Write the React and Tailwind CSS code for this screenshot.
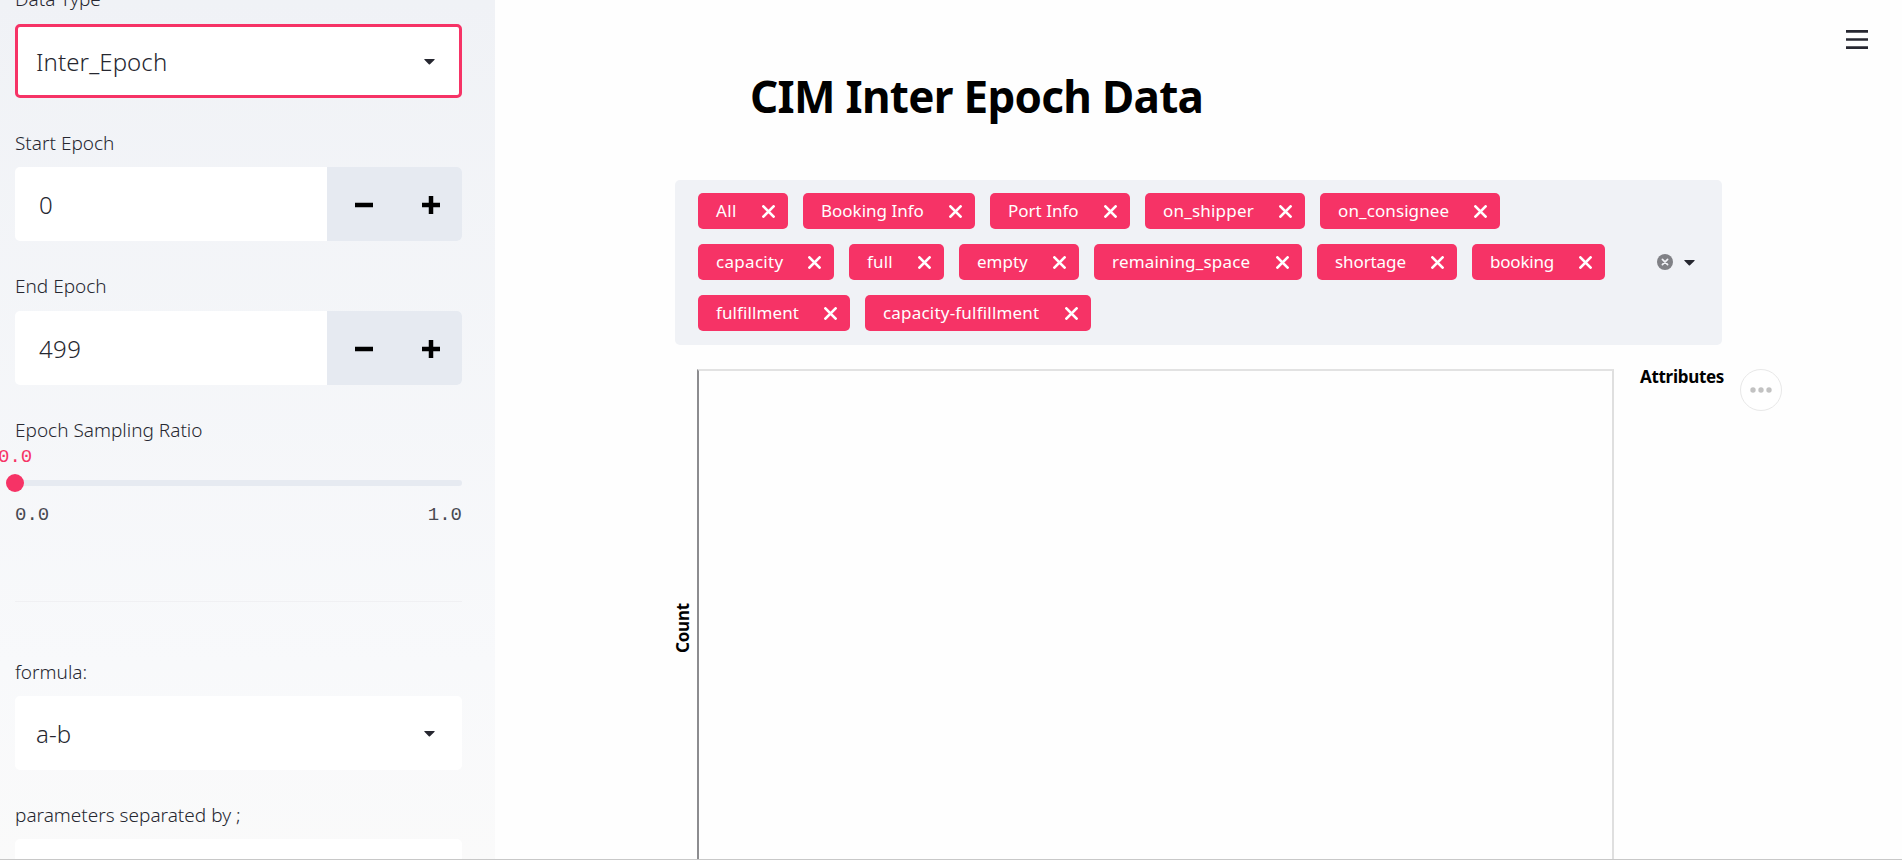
const Caret = () => (
  <svg className="h-[6px] w-[11px]" viewBox="0 0 11 6" fill="#262730">
    <path d="M0.2 0.6Q0 0 0.8 0H10.2Q11 0 10.6 0.7L6 5.2Q5.4 5.8 4.8 5.2Z" />
  </svg>
);

const Label = ({ children, className = '' }) => (
  <div className={`h-6 text-[19px] font-light leading-6 text-[#262730] ${className}`}>{children}</div>
);

const Select = ({ value, active, className = '' }) => (
  <div
    className={`flex h-[74px] w-[447px] items-center justify-between rounded-[5px] border-[3px] bg-white pl-[18px] pr-[24px] pt-px ${
      active ? 'border-[#f63366]' : 'border-white'
    } ${className}`}
  >
    <span className="text-2xl font-[350] leading-9 tracking-[0.1px] text-[#262730]">{value}</span>
    <Caret />
  </div>
);

const NumberInput = ({ value }) => (
  <div className="flex h-[74px] w-[447px] overflow-hidden rounded-[5px] bg-white">
    <div className="flex flex-1 items-center pl-6 pt-px text-2xl font-[350] tracking-[0.4px] text-[#262730]">{value}</div>
    <div className="flex w-[135px] bg-[#e6eaf1]">
      <button className="flex flex-1 items-center justify-center pl-[6px] pt-[2px]">
        <svg className="h-[18px] w-[18px]" viewBox="0 0 18 18">
          <path d="M0 9H18" stroke="#000" strokeWidth="4.5" />
        </svg>
      </button>
      <button className="flex flex-1 items-center justify-center pl-[6px] pt-[2px]">
        <svg className="h-[18px] w-[18px]" viewBox="0 0 18 18">
          <path d="M0 9H18M9 0V18" stroke="#000" strokeWidth="4.5" />
        </svg>
      </button>
    </div>
  </div>
);

const Tag = ({ text, size }) => (
  <div className={`flex h-9 items-center justify-between rounded-[5px] bg-[#f63366] pl-[18px] pr-[13px] text-white ${size}`}>
    <span className="whitespace-nowrap text-[17px] leading-6">{text}</span>
    <svg className="mt-px h-[13px] w-[13px] shrink-0" viewBox="0 0 13 13">
      <path d="M1.4 1.4L11.6 11.6M11.6 1.4L1.4 11.6" stroke="#fff" strokeWidth="2.7" strokeLinecap="round" />
    </svg>
  </div>
);

const rows = [
  [
    ['All', 'w-[90px] tracking-[0.4px]'],
    ['Booking Info', 'w-[172px]'],
    ['Port Info', 'w-[140px]'],
    ['on_shipper', 'w-[160px] tracking-[0.2px]'],
    ['on_consignee', 'w-[180px] tracking-[0.1px]'],
  ],
  [
    ['capacity', 'w-[136px] tracking-[0.3px]'],
    ['full', 'w-[95px] tracking-[0.2px]'],
    ['empty', 'w-[120px]'],
    ['remaining_space', 'w-[208px] tracking-[0.2px]'],
    ['shortage', 'w-[140px] tracking-[-0.1px]'],
    ['booking', 'w-[133px] tracking-[-0.2px]'],
  ],
  [
    ['fulfillment', 'w-[152px] tracking-[0.1px]'],
    ['capacity-fulfillment', 'w-[226px] tracking-[0.2px]'],
  ],
];

const Sidebar = () => (
  <aside className="h-[859px] w-[495px] shrink-0 overflow-hidden bg-linear-to-b from-[#f0f2f6] via-[#f8f9fb] via-77% to-[#fafafa] pl-[15px]">
    <Label className="-mt-[13px]">Data Type</Label>
    <Select value="Inter_Epoch" active className="mt-[13px]" />
    <Label className="mb-3 mt-[33px]">Start Epoch</Label>
    <NumberInput value="0" />
    <Label className="mb-[13px] mt-[33px]">End Epoch</Label>
    <NumberInput value="499" />
    <Label className="mt-[33px]">Epoch Sampling Ratio</Label>
    <div className="w-[447px] font-['Liberation_Mono',monospace] text-[19px] leading-6">
      <div className="-ml-[17px] mt-[3px] h-6 text-[#f63366]">0.0</div>
      <div className="mt-[5px] flex h-[18px] items-center">
        <div className="-ml-[9px] h-[18px] w-[18px] shrink-0 rounded-full bg-[#f63366]" />
        <div className="h-1.5 flex-1 rounded-r-[3px] bg-[#e6eaf1]" />
      </div>
      <div className="mt-[11px] flex justify-between text-[#484951]">
        <span>0.0</span>
        <span>1.0</span>
      </div>
    </div>
    <hr className="mt-[74px] h-px w-[447px] border-0 border-t border-[#f0f0f3]" />
    <Label className="mb-3 mt-[58px]">formula:</Label>
    <Select value="a-b" />
    <Label className="mb-3 mt-[33px]">parameters separated by ;</Label>
    <Select value="" />
  </aside>
);

export default function App() {
  return (
    <div className="h-[860px] w-[1902px] overflow-hidden border-b border-[#c8c8c8] bg-[#fefefe] font-['Noto_Sans',sans-serif]">
      <div className="flex h-[859px]">
        <Sidebar />
        <main className="relative flex-1 pl-[180px]">
          <h1 className="ml-[75px] mt-[66px] h-[60px] whitespace-nowrap text-[44px] font-bold leading-[60px] tracking-[-0.7px] text-black">
            CIM Inter Epoch Data
          </h1>
          <div className="mt-[54px] flex h-[165px] w-[1047px] items-center justify-between rounded-[5px] bg-[#f0f2f6] pl-[23px] pr-[27px]">
            <div className="flex flex-col gap-[15px] pb-px">
              {rows.map((row, i) => (
                <div key={i} className="flex gap-[15px]">
                  {row.map(([text, size]) => (
                    <Tag key={text} text={text} size={size} />
                  ))}
                </div>
              ))}
            </div>
            <div className="flex items-center gap-[11px]">
              <svg className="mb-px h-4 w-4" viewBox="0 0 16 16">
                <circle cx="8" cy="8" r="8" fill="#808186" />
                <path d="M5.4 5.4L10.6 10.6M10.6 5.4L5.4 10.6" stroke="#f0f2f6" strokeWidth="1.7" strokeLinecap="round" />
              </svg>
              <Caret />
            </div>
          </div>
          <div className="mt-6 flex h-[490px]">
            <div className="flex h-[518px] w-[22px] shrink-0 items-center justify-center">
              <span className="mr-[6px] -rotate-90 text-[17px] font-bold leading-5 tracking-[-0.2px] text-black">Count</span>
            </div>
            <div className="h-[518px] w-[917px] border-2 border-b-0 border-l-[#8c8c8f] border-r-[#dfdfdf] border-t-[#e2e2e2]" />
            <span className="-mt-1 ml-[26px] h-6 w-[85px] text-[17px] font-bold leading-6 tracking-[-0.3px] text-black">Attributes</span>
            <div className="ml-[15px] flex h-[42px] w-[42px] items-center justify-center rounded-full border border-[#e8e8e8] bg-white">
              <svg className="h-[6px] w-[22px]" viewBox="0 0 22 6" fill="#c2c2c2">
                <circle cx="3" cy="3" r="2.7" />
                <circle cx="11" cy="3" r="2.7" />
                <circle cx="19" cy="3" r="2.7" />
              </svg>
            </div>
          </div>
          <button className="absolute right-[34px] top-[30px]">
            <svg className="h-[20px] w-[22px]" viewBox="0 0 22 20">
              <path d="M0 1.4H22M0 9.5H22M0 17.6H22" stroke="#262730" strokeWidth="2.6" />
            </svg>
          </button>
        </main>
      </div>
    </div>
  );
}
